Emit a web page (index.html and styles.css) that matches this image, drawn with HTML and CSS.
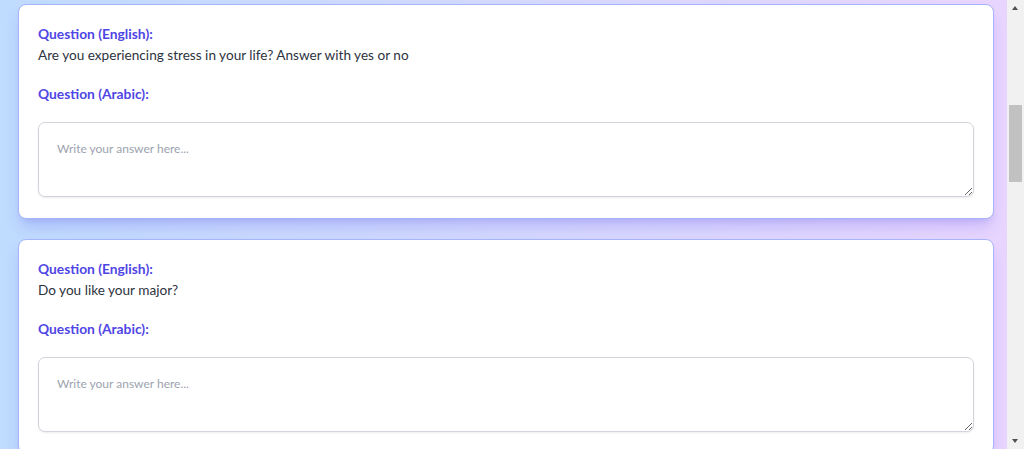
FILE: index.html
```html
<!DOCTYPE html>
<html lang="en">
<head>
<meta charset="utf-8">
<title>Questions</title>
<link rel="stylesheet" href="styles.css">
</head>
<body>
<main class="list">
  <section class="card">
    <div class="label">Question (English):</div>
    <div class="text">Are you experiencing stress in your life? Answer with yes or no</div>
    <div class="label label-ar">Question (Arabic):</div>
    <textarea class="answer" placeholder="Write your answer here..."></textarea>
  </section>
  <section class="card">
    <div class="label">Question (English):</div>
    <div class="text">Do you like your major?</div>
    <div class="label label-ar">Question (Arabic):</div>
    <textarea class="answer" placeholder="Write your answer here..."></textarea>
  </section>
</main>
<div class="scrollbar" aria-hidden="true">
  <span class="sb-arrow sb-up"></span>
  <span class="sb-thumb"></span>
  <span class="sb-arrow sb-down"></span>
</div>
</body>
</html>
```

FILE: styles.css
```css
html, body {
  margin: 0;
  padding: 0;
}
body {
  background: linear-gradient(to right, #bfdbfe, #e9d5ff);
  font-family: "Lato", "Open Sans", sans-serif;
  color: #1f2937;
  min-height: 100vh;
}
.list {
  display: flex;
  flex-direction: column;
  gap: 20px;
  padding: 4px 30px 40px 18px;
}
.card {
  display: flex;
  flex-direction: column;
  background: #ffffff;
  border: 1px solid #a5b4fc;
  border-radius: 8px;
  padding: 19px 19px 21px 19px;
  box-shadow: 0 10px 15px -3px rgba(79, 70, 229, 0.22), 0 4px 6px -4px rgba(79, 70, 229, 0.18);
}
.label {
  color: #4f46e5;
  font-weight: 700;
  font-size: 13.8px;
  line-height: 20px;
}
.text {
  font-size: 13.6px;
  line-height: 20px;
  margin-top: 1px;
  color: #2d3340;
}
.label-ar {
  margin-top: 19px;
}
.answer {
  margin-top: 18px;
  height: 75px;
  box-sizing: border-box;
  border: 1px solid #d1d5db;
  border-radius: 7px;
  padding: 18px;
  font-family: "Lato", "Open Sans", sans-serif;
  font-size: 12px;
  line-height: 16px;
  color: #1f2937;
  box-shadow: 0 1px 2px rgba(0, 0, 0, 0.08);
  resize: vertical;
  outline: none;
}
.answer::placeholder {
  color: #9ca3af;
}

/* browser scrollbar as shown in the screenshot */
.scrollbar {
  position: fixed;
  top: 0;
  right: 0;
  width: 17px;
  height: 100vh;
  background: #f1f1f1;
}
.sb-arrow {
  position: absolute;
  left: 5px;
  width: 0;
  height: 0;
  border-left: 3.5px solid transparent;
  border-right: 3.5px solid transparent;
}
.sb-up {
  top: 6px;
  border-bottom: 4px solid #505050;
}
.sb-down {
  bottom: 6px;
  border-top: 4px solid #505050;
}
.sb-thumb {
  position: absolute;
  top: 105px;
  left: 2px;
  width: 13px;
  height: 77px;
  background: #c1c1c1;
}
```
